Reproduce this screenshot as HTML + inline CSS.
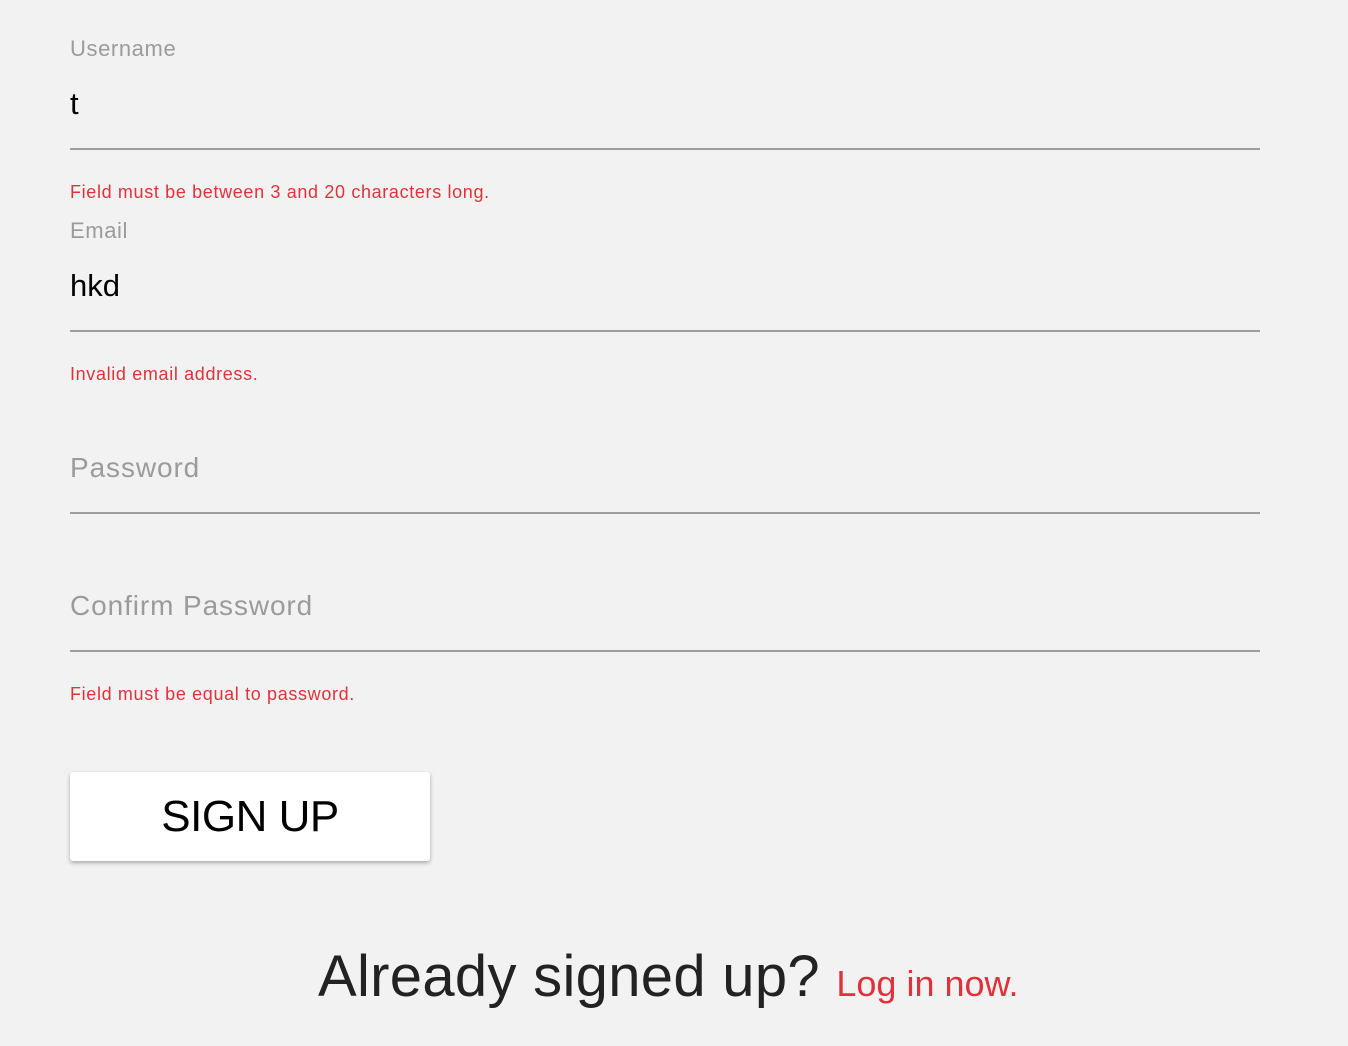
<!DOCTYPE html>
<html><head><meta charset="utf-8"><style>
body{margin:0;background:#f2f2f2;font-family:"Liberation Sans",sans-serif;width:1348px;height:1046px;position:relative;overflow:hidden}
.a{position:absolute;white-space:nowrap}
.lbl{color:#9b9b9b;font-size:22px;letter-spacing:0.6px}
.big{color:#9b9b9b;font-size:28px;letter-spacing:0.9px}
.val{color:#000;font-size:31px}
.err{color:#e0323a;font-size:18px;letter-spacing:0.65px}
.line{position:absolute;left:70px;width:1190px;height:2px;background:#9e9e9e}
.btn{position:absolute;left:70px;top:772px;width:360px;height:89px;background:#fff;border-radius:3px;box-shadow:0 2px 4px rgba(0,0,0,.3);font-size:44px;color:#000;text-align:center;line-height:89px;letter-spacing:-0.5px}
</style></head><body>
<div class="a lbl" style="left:70px;top:36px">Username</div>
<div class="a val" style="left:70px;top:86px">t</div>
<div class="line" style="top:148px"></div>
<div class="a err" style="left:70px;top:182px">Field must be between 3 and 20 characters long.</div>
<div class="a lbl" style="left:70px;top:218px">Email</div>
<div class="a val" style="left:70px;top:268px">hkd</div>
<div class="line" style="top:330px"></div>
<div class="a err" style="left:70px;top:364px">Invalid email address.</div>
<div class="a big" style="left:70px;top:452px">Password</div>
<div class="line" style="top:512px"></div>
<div class="a big" style="left:70px;top:590px">Confirm Password</div>
<div class="line" style="top:650px"></div>
<div class="a err" style="left:70px;top:684px">Field must be equal to password.</div>
<div class="btn">SIGN UP</div>
<div class="a" style="left:318px;top:943px;font-size:58px;color:#222;letter-spacing:0.3px">Already signed up? <span style="color:#e0323a;font-size:36px;letter-spacing:0">Log in now.</span></div>
</body></html>
